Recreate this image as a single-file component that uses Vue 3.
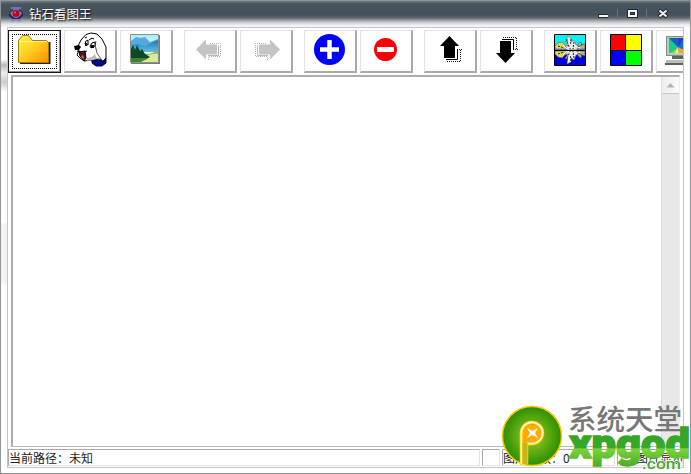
<script setup>
const tools = [
  { id: 'folder', active: true },
  { id: 'dog' },
  { id: 'picture' },
  { id: 'prev', group: true },
  { id: 'next' },
  { id: 'plus', group: true },
  { id: 'minus' },
  { id: 'up', group: true },
  { id: 'down' },
  { id: 'mirror', group: true },
  { id: 'colors' },
  { id: 'monitor' }
]
</script>

<template>
  <main class="window">
    <header class="titlebar">
      <svg class="app-icon" width="14" height="16" viewBox="0 0 14 16">
        <path d="M2 1h10v2h-2v2H4V3H2z" fill="#6f71bd" />
        <path d="M0 7l3-3h8l3 3v3l-3 3H3l-3-3z" fill="#292452" />
        <path d="M1 7l4-3h4l4 3-2 3-3 2H6l-3-2z" fill="#927cb5" />
        <circle cx="7" cy="7.500" r="3.500" fill="#b20820" />
        <circle cx="6" cy="6.500" r="1" fill="#ff596c" />
        <path d="M1 12l3 2h6l3-2M2 15h4m2 0h4" fill="none" stroke="#7084dc" />
      </svg>
      <h1>钻石看图王</h1>
      <svg class="controls" width="76" height="16" viewBox="0 0 76 16">
        <path d="M20.500 3v11M49.500 3v11" stroke="#69727a" />
        <g fill="none" stroke="#222a30" stroke-width="4">
          <path d="M1 10h10M32 5h7v5h-7zM62 4l8 7M70 4l-8 7" />
        </g>
        <g fill="none" stroke="#f4f4f4" stroke-width="2">
          <path d="M2 10h9M32 5h7v5h-7zM62.500 4.500l7 6M69.500 4.500l-7 6" />
        </g>
      </svg>
    </header>
    <div class="body">
      <section class="client">
        <nav class="toolbar">
          <button v-for="t in tools" :key="t.id" :class="{ active: t.active, group: t.group }">
            <svg width="40" height="38" viewBox="0 0 40 38">
              <g v-if="t.id === 'folder'" transform="translate(-1 1)">
                <defs>
                  <linearGradient id="gold" x1="0" y1="0" x2="1" y2="1">
                    <stop offset="0" stop-color="#fff34a" /><stop offset=".5" stop-color="#ffcb1f" /><stop offset="1" stop-color="#ff8d00" />
                  </linearGradient>
                </defs>
                <path d="M6 31h29.500V10" fill="none" stroke="#2c2100" stroke-width="2" />
                <path d="M4.500 30.500V8.500l4-5h6l4 5h14l2 2v20z" fill="url(#gold)" stroke="#a67b10" />
                <path d="M5 9.500h28" stroke="#fff58b" />
              </g>
              <template v-else-if="t.id === 'dog'">
                <path d="M22 28l11 2 3-3v5l-4 3h-6l-4-3z" fill="#000b80" stroke="#000040" />
                <path d="M8 15l3-6 5-5.500 5-1.500 6 1 5 5 4 8v11l-3 3-4-2-7 1-8 1-4-3-3-3 2-5-4-2z" fill="#fff" stroke="#000" />
                <path d="M26 10l-1 4 2 8 4 6 2 2" fill="none" stroke="#555" />
                <path d="M7 20l6 1 4-1" fill="none" stroke="#000" />
                <path d="M4 15l5-1 2 2-2 3H5z" fill="#000" />
                <path d="M9 21l6-1 1 7-2 3-4-5z" fill="#54191c" stroke="#000" />
                <path d="M11 25l2-1 1 4-2-1z" fill="#d85e60" />
                <path d="M15 13l1-3 2-1v5zM20 15l2-3 3-1v4l-4 2z" fill="#fff" stroke="#000" />
                <path d="M15 12h2v3h-2zM21 14h3v3h-3z" fill="#000" />
                <path d="M15 7l2-1M19 9l3-2 2 1" fill="none" stroke="#000" />
                <path d="M17 27l5-1 3-3 2 5-4 1-6 1z" fill="#bababa" />
              </template>
              <template v-else-if="t.id === 'picture'">
                <defs>
                  <linearGradient id="sky" x1="0" y1="0" x2="0" y2="1"><stop offset="0" stop-color="#a6edfa" /><stop offset=".5" stop-color="#e8f8e4" /></linearGradient>
                  <linearGradient id="hill" x1="0" y1="0" x2="0" y2="1"><stop offset="0" stop-color="#147bc5" /><stop offset="1" stop-color="#65bdd8" /></linearGradient>
                </defs>
                <path d="M5 4h29v29H5z" fill="#777d74" />
                <path d="M4.500 3.500h28v28h-28z" fill="url(#sky)" stroke="#85918b" />
                <path d="M5 10l5-4 5 1 4-1 5 5 8-3v10H5z" fill="#55a9df" />
                <path d="M5 14l6-1 8 2 6-3 7-3v12H5z" fill="url(#hill)" />
                <path d="M5 21l10 1 8 1 9-3v11H5z" fill="#81c051" />
                <path d="M18 27q6-5 14-4v8H12z" fill="#dce99b" />
                <path d="M5 18l2-4 2 5 2-5 3 6 2-2 3 5 5 3-5 3H5z" fill="#0c4823" />
                <path d="M5 27h17l-7 4H5z" fill="#3d8430" />
              </template>
              <g v-else-if="t.id === 'prev' || t.id === 'next'" :transform="t.id === 'next' ? 'matrix(-1 0 0 1 40 0)' : null">
                <path d="M20 12.500h10.500v13H18.500v4.500" fill="none" stroke="#b2b2b2" stroke-dasharray="1 1" />
                <path d="M18 24.500h10.500v-10" fill="none" stroke="#b9b9b9" />
                <path d="M6 18.500L16 8.500v5h11v10H16v5z" fill="#c4c4c4" />
              </g>
              <g v-else-if="t.id === 'plus'">
                <circle cx="19.500" cy="18.500" r="15.500" fill="#00f" /><path d="M10 18.500h19M19.500 9v19" stroke="#fff" stroke-width="4.500" />
              </g>
              <g v-else-if="t.id === 'minus'">
                <circle cx="19.500" cy="18.500" r="11.500" fill="#f80008" /><path d="M11 18.500h17" stroke="#fff" stroke-width="5" />
              </g>
              <g v-else-if="t.id === 'up' || t.id === 'down'" :transform="t.id === 'down' ? 'matrix(1 0 0 -1 0 37)' : null">
                <path d="M29 18.500h4M17 30.500h13.500V19" fill="none" stroke="#111" stroke-dasharray="1 1" />
                <path d="M16 28.500h11.500V18" fill="none" stroke="#000" />
                <path d="M19.500 5L29 15h-4v12H14V15h-4z" fill="#000" />
              </g>
              <g v-else-if="t.id === 'mirror'" transform="translate(0 -1)">
                <path d="M4.500 4.500h31v15h-31z" fill="#00f4f4" /><path d="M4.500 19.500h31v16h-31z" fill="#0000df" />
                <g v-for="n in 2" :key="n" :transform="n === 2 ? 'matrix(1 0 0 -1 0 40)' : null">
                  <path d="M17 6l4 2v4l3-2 2 5 3 1-2 4H17l-3-5 4 1-3-5 3 1z" fill="#e8e8e8" stroke="#666" stroke-width=".5" />
                  <path d="M5 16l3-3 4-1 3 3 2 4H5z" fill="#e4d665" stroke="#444" stroke-width=".5" />
                  <path d="M27 19l1-5 3-2 1 3 3-1v5z" fill="#b4b78b" stroke="#444" stroke-width=".5" />
                  <path d="M16 9l3 8M21 9l-1 10M24 12l-1 7M8 16l6 2M28 17l5-3" stroke="#222" stroke-dasharray="2 1" />
                  <path d="M18 8l3 10M13 15l4 4M25 16l5 2" stroke="#fff" />
                </g>
                <path d="M4.500 4.500h31v31h-31zM5 20.500h30" fill="none" stroke="#000" />
              </g>
              <g v-else-if="t.id === 'colors'" transform="translate(0 -1)">
                <path fill="red" d="M5 5h15v15H5z" /><path fill="#ff0" d="M20 5h15v15H20z" /><path fill="#00f" d="M5 20h15v15H5z" /><path fill="#0f0" d="M20 20h15v15H20z" />
                <path d="M4.500 4.500h31v31h-31zM19.500 5v30M5 20.500h30" fill="none" stroke="#000" />
              </g>
              <g v-else>
                <path d="M4 5h32v20H4z" fill="#858f87" /><path d="M5 6h30v18H5z" fill="#bdc7bf" />
                <path d="M7 7h26v15H7z" fill="#0874c4" /><path d="M16 16L7 7v15z" fill="#18cc96" /><path d="M16 16L7 7h8z" fill="#1162b3" /><path d="M16 16V7h6z" fill="#2639e4" /><path d="M16 16L7 22h5z" fill="#6bdd3e" /><path d="M16 16l-4 6h5z" fill="#f9f437" /><path d="M16 16l1 6h11z" fill="#f5a333" />
                <path d="M10 25h19v3H10z" fill="#59645c" /><path d="M4 29h31v3H4z" fill="#b7beb7" /><path d="M3 33h31" stroke="#59645c" stroke-width="2" />
              </g>
            </svg>
          </button>
        </nav>
        <div class="viewer">
          <div class="scrollbar"><span class="scroll-up"><svg width="9" height="5"><path d="M4.500 0L8.500 4.500h-8z" fill="#b2b2b2" /></svg></span></div>
        </div>
        <footer class="status">
          <span class="path">当前路径：未知</span><span></span><span class="count">图片总数：0</span><span class="display">图片显示</span>
        </footer>
      </section>
    </div>
    <svg class="brand" width="191" height="72" viewBox="0 0 191 72">
      <defs>
        <radialGradient id="orb"><stop offset="0" stop-color="#a5ce13" /><stop offset=".55" stop-color="#61ab12" /><stop offset="1" stop-color="#299000" /></radialGradient>
        <linearGradient id="leaf" gradientUnits="userSpaceOnUse" x1="0" y1="28" x2="0" y2="66"><stop offset="0" stop-color="#33a527" /><stop offset=".46" stop-color="#37a829" /><stop offset=".5" stop-color="#79d43a" /><stop offset="1" stop-color="#48a726" /></linearGradient>
      </defs>
      <circle cx="32" cy="34" r="29.500" fill="url(#orb)" stroke="#ffc400" stroke-width="1.500" />
      <path d="M21 62V32a11 11 0 1 1 11 10h-5v19z" fill="#ffab00" stroke="#ffdf35" stroke-width="2.500" />
      <path d="M21.500 62V32a10.500 10.500 0 1 1 10 9.500h-5" fill="none" stroke="#fff6cc" stroke-width="1.500" />
      <path d="M22.500 41h5v21h-5z" fill="#c6b716" />
      <circle cx="32.500" cy="31" r="7.500" fill="#ffac00" />
      <path d="M27 26l5.500 3 5.500-3-3 5 3 5-5.500-3-5.500 3 3-5z" fill="#fff" />
      <text class="brand-en" x="69" y="56" textLength="121" lengthAdjust="spacingAndGlyphs">xpgod</text>
      <text class="brand-cn" x="68" y="28" textLength="114" lengthAdjust="spacingAndGlyphs">系统天堂</text>
      <text class="brand-com" x="142" y="67" textLength="39" lengthAdjust="spacingAndGlyphs">.com</text>
    </svg>
  </main>
</template>

<style>
body { overflow: hidden; }
</style>
<style scoped>
* { box-sizing: border-box; }
.window { position: relative; width: 691px; height: 474px; border: 1px solid #929698; background: #fcfcfc; display: flex; flex-direction: column; overflow: hidden; }
.titlebar { height: 26px; flex: none; display: flex; align-items: flex-start; padding: 5px 17px 0 8px; background: linear-gradient(#707c83 0, #46545e 3px, #46515a 14px, #606970 17px, #adb2b5 20px, #e2e4e5 23px, #f9f9f9 26px); }
h1 { margin: 0 0 0 6px; font: 12.500px/15px "Noto Sans CJK SC", sans-serif; color: #fff; text-shadow: 1px 1px 2px #000; }
.controls { margin-left: auto; }
.body { flex: 1; padding: 0 6px 5px; background: linear-gradient(#fff 0, #fff 32px, #bbb 38px, #eee 46px, #ccc 55px, #fff 65px, #fff 195px, #f3f3f3 198px, #f3f3f3 255px, #fff 260px) left / 6px 100% no-repeat #fff; }
.client { height: 441px; display: flex; flex-direction: column; border: 1px solid #c4c4c4; background: #fff; overflow: hidden; }
.toolbar { display: flex; gap: 3px; height: 45px; flex: none; padding-top: 2px; overflow: hidden; }
button { flex: none; width: 53px; height: 43px; padding: 0; display: flex; align-items: flex-start; justify-content: center; background: #fff; border: 1px solid #e2e2e2; border-right: 2px solid #a9a9a9; border-bottom: 2px solid #a9a9a9; font-family: sans-serif; }
button.group { margin-left: 8px; }
button.active { border: 1px solid #151515; box-shadow: inset -1px -1px #929292; outline: 1px dotted #000; outline-offset: -5px; }
.viewer { height: 372px; margin: 2px 3px 0; border: 2px solid #adadad; border-right: 1px solid #eee; border-bottom: 1px solid #b8b8b8; display: flex; justify-content: flex-end; }
.scrollbar { width: 18px; background: #e8e8e8; border-left: 1px solid #ddd; }
.scroll-up { height: 17px; display: flex; align-items: center; justify-content: center; background: linear-gradient(90deg, #eee, #fafafa); border-bottom: 1px solid #c9c9c9; }
.status { display: grid; grid-template-columns: 472px 18px 113px 1fr; gap: 2px; height: 17px; margin-top: 2px; font: 12px/16px "Noto Sans CJK SC", sans-serif; color: #222; }
.status span { border: 1px solid #e2e2e2; border-top-color: #aaa; border-left-color: #aaa; white-space: nowrap; overflow: hidden; line-height: 15px; }
.status .display { padding-left: 18px; }
.brand { position: absolute; left: 499px; top: 401px; }
.brand-cn { font: 500 28px "Noto Sans CJK SC", sans-serif; fill: #777; }
.brand-en { font: 900 40px Roboto, sans-serif; fill: url(#leaf); stroke: url(#leaf); stroke-width: 1.500px; }
.brand-com { font: 500 15px Roboto, sans-serif; fill: #48a72a; stroke: #fff; stroke-width: 1.500px; paint-order: stroke; }
</style>
